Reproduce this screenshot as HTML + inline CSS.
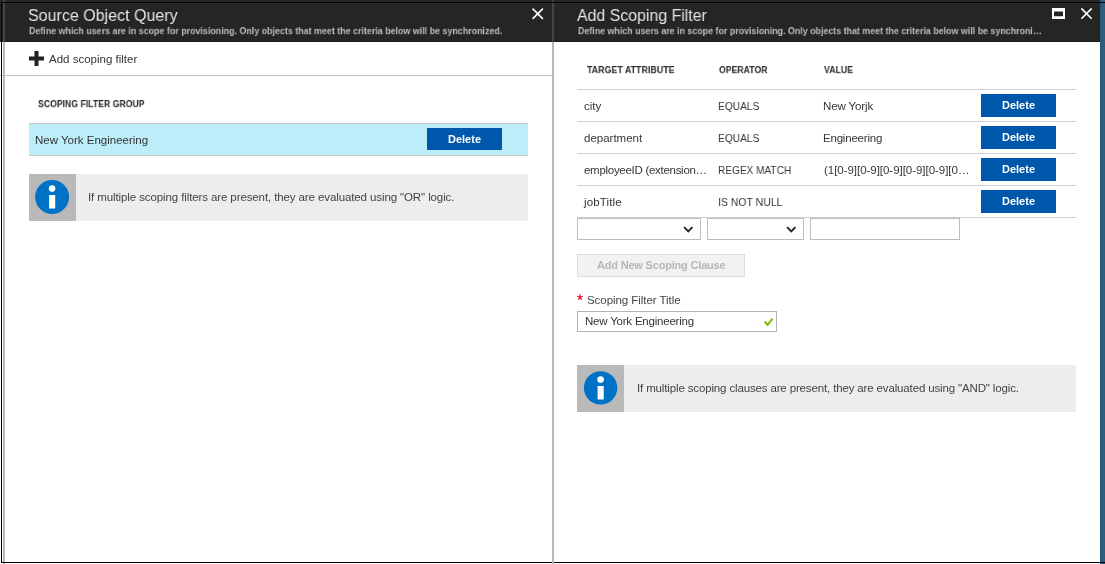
<!DOCTYPE html>
<html><head><meta charset="utf-8">
<style>
html,body{margin:0;padding:0;}
body{width:1105px;height:564px;position:relative;overflow:hidden;background:#fff;font-family:"Liberation Sans",sans-serif;}
.a{position:absolute;}
.t{position:absolute;white-space:nowrap;line-height:1;will-change:transform;}
</style></head><body>
<!-- header band -->
<div class="a" style="left:0;top:0;width:1105px;height:42px;background:#252525"></div>
<div class="a" style="left:0;top:41px;width:1100px;height:1px;background:#1b1b1b"></div>
<!-- left border -->
<div class="a" style="left:1px;top:2px;width:1px;height:561px;background:#000;z-index:5"></div>
<div class="a" style="left:3px;top:0;width:2px;height:42px;background:#444"></div>
<div class="a" style="left:3px;top:42px;width:2px;height:522px;background:#b9b9b9"></div>
<!-- bottom black line -->
<div class="a" style="left:1px;top:562px;width:1104px;height:1px;background:#000"></div>
<!-- divider -->
<div class="a" style="left:552px;top:0;width:2px;height:42px;background:#444"></div>
<div class="a" style="left:552px;top:42px;width:2px;height:522px;background:#b9b9b9"></div>
<!-- right blue strip -->
<div class="a" style="left:1100px;top:0;width:5px;height:564px;background:#2e5e7c"></div>
<div class="a" style="left:1100px;top:0;width:1px;height:564px;background:#1f5273"></div>
<div class="a" style="left:1100px;top:562px;width:5px;height:1px;background:#000"></div>
<div class="a" style="left:1px;top:2px;width:1104px;height:1px;background:#000"></div>

<!-- left close -->
<svg class="a" style="left:532px;top:8px" width="12" height="12" viewBox="0 0 12 12"><path d="M0.6 0.6L10.9 10.9M10.9 0.6L0.6 10.9" stroke="#fff" stroke-width="1.6"/></svg>

<!-- add scoping filter -->
<svg class="a" style="left:29px;top:51px" width="15" height="15" viewBox="0 0 15 15"><path d="M5.5 0h4v5.5h5.5v4h-5.5v5.5h-4v-5.5h-5.5v-4h5.5z" fill="#222"/></svg>
<div class="a" style="left:0;top:75px;width:552px;height:1px;background:#c2c2c2"></div>

<!-- scoping filter group row -->
<div class="a" style="left:29px;top:123px;width:499px;height:33px;background:#bcedf9;box-sizing:border-box;border-top:1px solid #c8c8c8;border-bottom:1px solid #c8c8c8"></div>
<div class="a" style="left:427px;top:128px;width:75px;height:22px;background:#0058ad"></div>

<!-- info L -->
<div class="a" style="left:29px;top:174px;width:499px;height:47px;background:#ededed"></div>
<div class="a" style="left:29px;top:174px;width:47px;height:47px;background:#b9b9b9"></div>
<svg class="a" style="left:35px;top:180px" width="35" height="35" viewBox="0 0 35 35"><circle cx="17.1" cy="17" r="17" fill="#0072c6"/><circle cx="17.1" cy="8.6" r="3.3" fill="#fff"/><rect x="14.1" y="15" width="6.1" height="13.5" fill="#fff"/></svg>

<!-- right header icons -->
<svg class="a" style="left:1052px;top:8px" width="13" height="11" viewBox="0 0 13 11"><path d="M0 0h13v11h-13z M2 3.4v4.9h9v-4.9z" fill="#fff" fill-rule="evenodd"/></svg>
<svg class="a" style="left:1081px;top:8px" width="12" height="12" viewBox="0 0 12 12"><path d="M0.4 0.4L10.7 10.7M10.7 0.4L0.4 10.7" stroke="#fff" stroke-width="1.6"/></svg>

<!-- table lines -->
<div class="a" style="left:577px;top:89px;width:499px;height:1px;background:#d0d0d0"></div>
<div class="a" style="left:577px;top:121px;width:499px;height:1px;background:#d0d0d0"></div>
<div class="a" style="left:577px;top:153px;width:499px;height:1px;background:#d0d0d0"></div>
<div class="a" style="left:577px;top:185px;width:499px;height:1px;background:#d0d0d0"></div>
<div class="a" style="left:577px;top:217px;width:499px;height:1px;background:#d0d0d0"></div>
<div class="a" style="left:981px;top:94px;width:75px;height:23px;background:#0058ad"></div>
<div class="a" style="left:981px;top:126px;width:75px;height:23px;background:#0058ad"></div>
<div class="a" style="left:981px;top:158px;width:75px;height:23px;background:#0058ad"></div>
<div class="a" style="left:981px;top:190px;width:75px;height:23px;background:#0058ad"></div>

<!-- dropdowns -->
<div class="a" style="left:577px;top:218px;width:124px;height:22px;box-sizing:border-box;border:1px solid #bcbcbc"></div>
<svg class="a" style="left:683px;top:225px" width="11" height="8" viewBox="0 0 11 8"><path d="M1.1 2.1L5.25 6.3L9.4 2.1" stroke="#222" stroke-width="1.9" fill="none"/></svg>
<div class="a" style="left:707px;top:218px;width:97px;height:22px;box-sizing:border-box;border:1px solid #bcbcbc"></div>
<svg class="a" style="left:786px;top:225px" width="11" height="8" viewBox="0 0 11 8"><path d="M1.1 2.1L5.25 6.3L9.4 2.1" stroke="#222" stroke-width="1.9" fill="none"/></svg>
<div class="a" style="left:810px;top:218px;width:150px;height:22px;box-sizing:border-box;border:1px solid #bcbcbc"></div>

<!-- add new scoping clause -->
<div class="a" style="left:577px;top:254px;width:168px;height:23px;box-sizing:border-box;border:1px solid #dcdcdc;background:#f2f2f2"></div>

<!-- required asterisk -->
<svg class="a" style="left:577px;top:294px" width="7" height="7" viewBox="0 0 7 7"><path d="M3 0.2V3.3M3 3.3L0.2 2.3M3 3.3L5.8 2.3M3 3.3L1.3 5.7M3 3.3L4.7 5.7" stroke="#e81123" stroke-width="1.2"/></svg>

<!-- title input -->
<div class="a" style="left:577px;top:311px;width:200px;height:21px;box-sizing:border-box;border:1px solid #b4b4b4"></div>
<svg class="a" style="left:762px;top:316px" width="13" height="12" viewBox="0 0 13 12"><path d="M2.6 5.4L5.5 8.9L10.5 2.6" stroke="#7fba00" stroke-width="1.9" fill="none"/></svg>

<!-- info R -->
<div class="a" style="left:577px;top:365px;width:499px;height:47px;background:#ededed"></div>
<div class="a" style="left:577px;top:365px;width:47px;height:47px;background:#b9b9b9"></div>
<svg class="a" style="left:583px;top:371px" width="35" height="35" viewBox="0 0 35 35"><circle cx="17.6" cy="16.9" r="16.7" fill="#0072c6"/><circle cx="17.6" cy="8.6" r="3.3" fill="#fff"/><rect x="14.6" y="15" width="6.1" height="13.5" fill="#fff"/></svg>

<div class="t" style="left:28.06px;top:7px;font-size:17px;font-weight:normal;color:#e4e4e4;transform:scale(0.9427,1);transform-origin:0 0">Source Object Query</div>
<div class="t" style="left:29.00px;top:27px;font-size:10px;font-weight:bold;color:#bdbdbd;transform:scale(0.8889,0.9);transform-origin:0 0">Define which users are in scope for provisioning. Only objects that meet the criteria below will be synchronized.</div>
<div class="t" style="left:577.00px;top:7px;font-size:17px;font-weight:normal;color:#e4e4e4;transform:scale(0.9348,1);transform-origin:0 0">Add Scoping Filter</div>
<div class="t" style="left:578.00px;top:27px;font-size:10px;font-weight:bold;color:#bdbdbd;transform:scale(0.8868,0.9);transform-origin:0 0">Define which users are in scope for provisioning. Only objects that meet the criteria below will be synchroni…</div>
<div class="t" style="left:49px;top:54px;font-size:11.5px;font-weight:normal;color:#333333;letter-spacing:0.000px">Add scoping filter</div>
<div class="t" style="left:38.00px;top:100px;font-size:10px;font-weight:bold;color:#2a2a2a;transform:scale(0.8689,0.9);transform-origin:0 0">SCOPING FILTER GROUP</div>
<div class="t" style="left:35px;top:135px;font-size:11.5px;font-weight:normal;color:#333333;letter-spacing:0.000px">New York Engineering</div>
<div class="t" style="left:448px;top:134px;font-size:11px;font-weight:bold;color:#ffffff;letter-spacing:0.000px">Delete</div>
<div class="t" style="left:88px;top:192px;font-size:11.5px;font-weight:normal;color:#444444;letter-spacing:-0.105px">If multiple scoping filters are present, they are evaluated using &quot;OR&quot; logic.</div>
<div class="t" style="left:587.00px;top:66px;font-size:10px;font-weight:bold;color:#2a2a2a;transform:scale(0.8866,0.9);transform-origin:0 0">TARGET ATTRIBUTE</div>
<div class="t" style="left:719.00px;top:66px;font-size:10px;font-weight:bold;color:#2a2a2a;transform:scale(0.8704,0.9);transform-origin:0 0">OPERATOR</div>
<div class="t" style="left:824.00px;top:66px;font-size:10px;font-weight:bold;color:#2a2a2a;transform:scale(0.8750,0.9);transform-origin:0 0">VALUE</div>
<div class="t" style="left:584px;top:101px;font-size:11.5px;font-weight:normal;color:#363636;letter-spacing:0.000px">city</div>
<div class="t" style="left:718.11px;top:101px;font-size:11.5px;font-weight:normal;color:#363636;transform:scale(0.8864,1);transform-origin:0 0">EQUALS</div>
<div class="t" style="left:823px;top:101px;font-size:11.5px;font-weight:normal;color:#363636;letter-spacing:-0.125px">New Yorjk</div>
<div class="t" style="left:584px;top:133px;font-size:11.5px;font-weight:normal;color:#363636;letter-spacing:0.000px">department</div>
<div class="t" style="left:718.11px;top:133px;font-size:11.5px;font-weight:normal;color:#363636;transform:scale(0.8864,1);transform-origin:0 0">EQUALS</div>
<div class="t" style="left:823px;top:133px;font-size:11.5px;font-weight:normal;color:#363636;letter-spacing:-0.200px">Engineering</div>
<div class="t" style="left:584px;top:165px;font-size:11.5px;font-weight:normal;color:#363636;letter-spacing:-0.286px">employeeID (extension…</div>
<div class="t" style="left:718.12px;top:165px;font-size:11.5px;font-weight:normal;color:#363636;transform:scale(0.8765,1);transform-origin:0 0">REGEX MATCH</div>
<div class="t" style="left:824px;top:165px;font-size:11.5px;font-weight:normal;color:#363636;letter-spacing:-0.034px">(1[0-9][0-9][0-9][0-9][0-9][0…</div>
<div class="t" style="left:584px;top:197px;font-size:11.5px;font-weight:normal;color:#363636;letter-spacing:0.143px">jobTitle</div>
<div class="t" style="left:718.09px;top:197px;font-size:11.5px;font-weight:normal;color:#363636;transform:scale(0.9118,1);transform-origin:0 0">IS NOT NULL</div>
<div class="t" style="left:1002px;top:100px;font-size:11px;font-weight:bold;color:#ffffff;letter-spacing:0.000px">Delete</div>
<div class="t" style="left:1002px;top:132px;font-size:11px;font-weight:bold;color:#ffffff;letter-spacing:0.000px">Delete</div>
<div class="t" style="left:1002px;top:164px;font-size:11px;font-weight:bold;color:#ffffff;letter-spacing:0.000px">Delete</div>
<div class="t" style="left:1002px;top:196px;font-size:11px;font-weight:bold;color:#ffffff;letter-spacing:0.000px">Delete</div>
<div class="t" style="left:597px;top:260px;font-size:11px;font-weight:bold;color:#b6b6b6;letter-spacing:-0.190px">Add New Scoping Clause</div>
<div class="t" style="left:587px;top:295px;font-size:11.5px;font-weight:normal;color:#444444;letter-spacing:-0.053px">Scoping Filter Title</div>
<div class="t" style="left:585px;top:316px;font-size:11.5px;font-weight:normal;color:#363636;letter-spacing:-0.211px">New York Engineering</div>
<div class="t" style="left:637px;top:383px;font-size:11.5px;font-weight:normal;color:#444444;letter-spacing:-0.143px">If multiple scoping clauses are present, they are evaluated using &quot;AND&quot; logic.</div>
</body></html>
